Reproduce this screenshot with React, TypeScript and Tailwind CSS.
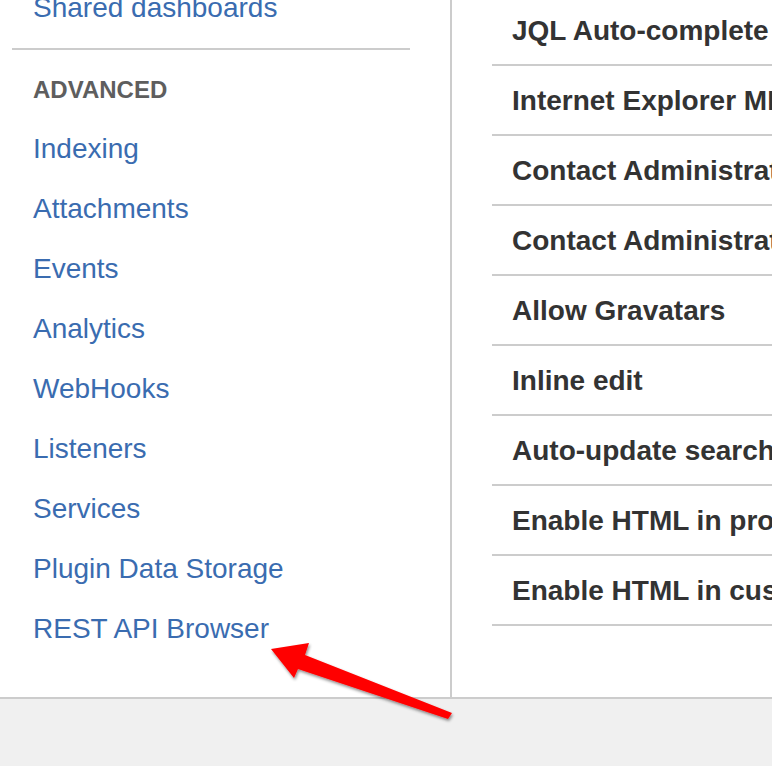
import React from "react";

const advanced = [
  "Indexing",
  "Attachments",
  "Events",
  "Analytics",
  "WebHooks",
  "Listeners",
  "Services",
  "Plugin Data Storage",
  "REST API Browser",
];

const options = [
  "JQL Auto-complete",
  "Internet Explorer MIME Sniffing Security Hole Workaround Policy",
  "Contact Administrators Form",
  "Contact Administrators Message",
  "Allow Gravatars",
  "Inline edit",
  "Auto-update search results",
  "Enable HTML in project descriptions",
  "Enable HTML in custom field descriptions",
];

export default function App() {
  return (
    <div className="relative h-[766px] w-full overflow-hidden bg-[#f0f0f0] font-['Liberation_Sans',Arial,sans-serif]">
      <div className="flex h-[699px] border-b-2 border-[#cccccc] bg-white">
        {/* Left: sidebar nav */}
        <nav className="w-[452px] shrink-0 border-r-2 border-[#cccccc] pl-[12px] pr-[40px]">
          <a className="-mt-[22px] block pl-[21px] text-[28px] leading-[60px] text-[#3a6cb0]">
            Shared dashboards
          </a>
          <div className="mt-[10px] h-[2px] bg-[#cccccc]" />
          <h3 className="mt-[22px] pl-[21px] text-[24px] font-bold leading-[36px] text-[#5e5e5e]">
            ADVANCED
          </h3>
          <ul className="mt-[11px]">
            {advanced.map((item) => (
              <li key={item}>
                <a className="block pl-[21px] text-[28px] leading-[60px] text-[#3a6cb0]">
                  {item}
                </a>
              </li>
            ))}
          </ul>
        </nav>

        {/* Right: settings table */}
        <div className="min-w-0 flex-1 overflow-hidden pl-[40px]">
          <ul className="-mt-[4px]">
            {options.map((o, i) => (
              <li
                key={i}
                className="whitespace-nowrap border-b-2 border-[#cccccc] pb-[13px] pl-[20px] pt-[15px] text-[28px] font-bold leading-[40px] text-[#333333]"
              >
                {o}
              </li>
            ))}
          </ul>
        </div>
      </div>

      {/* Annotation arrow */}
      <svg
        className="pointer-events-none absolute left-0 top-0"
        width="772"
        height="766"
        viewBox="0 0 772 766"
      >
        <defs>
          <filter id="sh" x="-20%" y="-20%" width="140%" height="140%">
            <feDropShadow dx="1" dy="2" stdDeviation="1.5" floodColor="#000" floodOpacity="0.45" />
          </filter>
        </defs>
        <polygon
          points="271,649 309,643 305,655 452,713 448,719 298,669 294,678"
          fill="#ff0000"
          filter="url(#sh)"
        />
      </svg>
    </div>
  );
}
